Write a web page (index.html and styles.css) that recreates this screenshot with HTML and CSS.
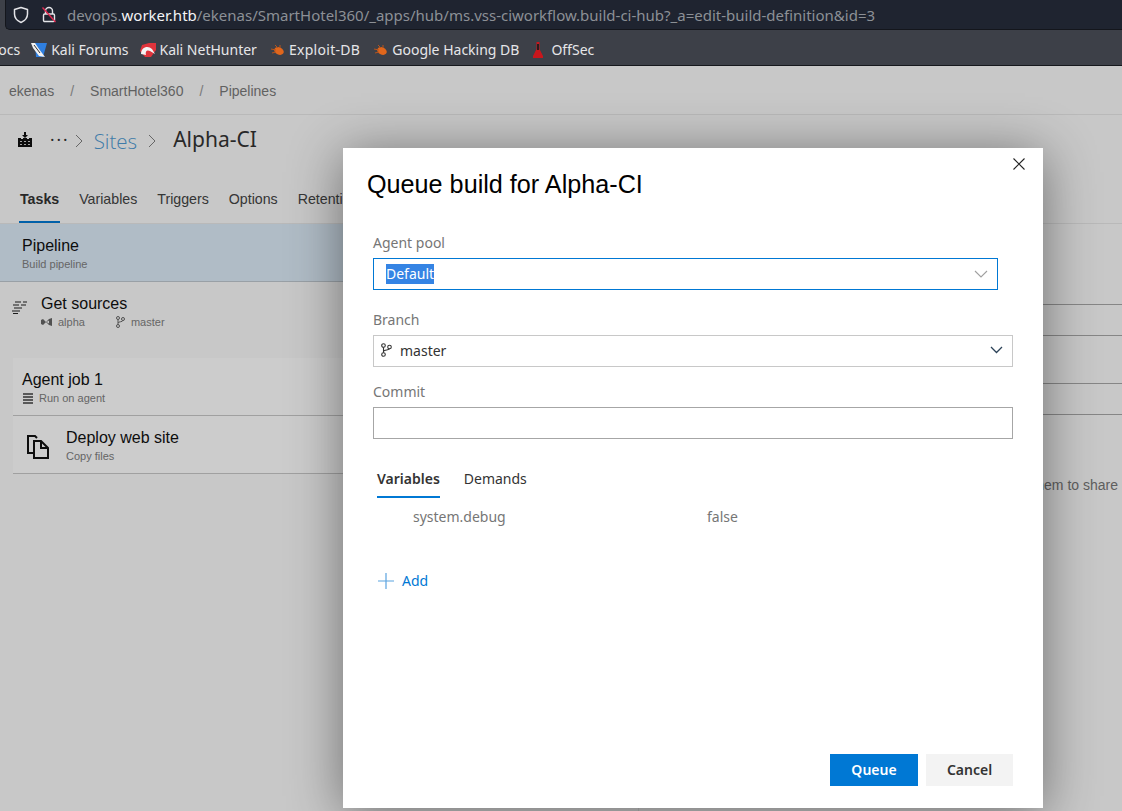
FILE: index.html
```html
<!DOCTYPE html>
<html lang="en">
<head>
  <meta charset="UTF-8" />
  <title>Alpha-CI - Pipelines</title>
  <link rel="stylesheet" href="styles.css">
</head>
<body>

  <!-- Browser chrome -->
  <div class="browser">
    <div class="urlbar">
      <svg class="shield" width="16" height="18" viewBox="0 0 16 18"><path d="M8 1.5 L14.5 3.5 V8 C14.5 12 11.5 15 8 16.5 C4.5 15 1.5 12 1.5 8 V3.5 Z" fill="none" stroke="#e4e4e8" stroke-width="1.5" stroke-linejoin="round"/></svg>
      <svg class="lock" width="14" height="18" viewBox="0 0 14 18"><path d="M3.5 8 V5 a3.5 3.5 0 0 1 7 0 V8" fill="none" stroke="#e4e4e8" stroke-width="1.4"/><rect x="1.5" y="8" width="11" height="7.5" rx="1.2" fill="none" stroke="#e4e4e8" stroke-width="1.4"/><path d="M0.5 1.5 L13.5 16" stroke="#e22850" stroke-width="1.4"/></svg>
      <span class="url">devops.<b>worker.htb</b>/ekenas/SmartHotel360/_apps/hub/ms.vss-ciworkflow.build-ci-hub?_a=edit-build-definition&amp;id=3</span>
    </div>
    <div class="bookmarks">
      <span class="bm bm-cut">Docs</span>
      <span class="bm bm-forums">
        <svg width="17" height="16" viewBox="0 0 17 16"><path d="M5 1 H17 L13 15 H6 Z" fill="#2f7fe0"/><path d="M1 1 L5 1 L9 7 L15 15 L9 14 L3 6 Z" fill="#f2f2f2"/><path d="M4 3 L10 11" stroke="#333" stroke-width="1"/></svg>
        Kali Forums
      </span>
      <span class="bm">
        <svg width="16" height="16" viewBox="0 0 16 16"><path d="M2 3 L9 1 H16 V8 L11 15 H5 L0 9 Z" fill="#e0343c"/><path d="M1 12 C1 5 8 3 12 7 L15 12 L10 9 C8 8 5 8 6 13 Z" fill="#f4f4f4"/></svg>
        Kali NetHunter
      </span>
      <span class="bm bm-exploit">
        <svg width="16" height="14" viewBox="0 0 16 14"><ellipse cx="9" cy="8" rx="5" ry="3.6" transform="rotate(25 9 8)" fill="#e0661c"/><path d="M1 6 L6 7 M2 10 L6 9 M5 2 L8 5 M10 2 L10 5" stroke="#b8541c" stroke-width="1"/></svg>
        Exploit-DB
      </span>
      <span class="bm bm-ghdb">
        <svg width="16" height="14" viewBox="0 0 16 14"><ellipse cx="9" cy="8" rx="5" ry="3.6" transform="rotate(25 9 8)" fill="#e0661c"/><path d="M1 6 L6 7 M2 10 L6 9 M5 2 L8 5 M10 2 L10 5" stroke="#b8541c" stroke-width="1"/></svg>
        Google Hacking DB
      </span>
      <span class="bm bm-offsec">
        <svg width="12" height="18" viewBox="0 0 12 18"><path d="M4.5 1 H7.5 V8 L11 15 V17 H1 V15 L4.5 8 Z" fill="#c8161c"/><path d="M5 3 H7 V9 H5 Z" fill="#2a1c1c"/></svg>
        OffSec
      </span>
    </div>
  </div>

  <!-- Page behind the dialog -->
  <div class="page">
    <nav class="crumbs">
      <span>ekenas</span><i>/</i><span>SmartHotel360</span><i>/</i><span>Pipelines</span>
    </nav>

    <div class="title-row">
      <svg class="build-icon" width="14" height="15" viewBox="0 0 14 15"><path d="M6 0 H8 V3 H10 L7 6 L4 3 H6 Z" fill="#111"/><path d="M0 6 H3 V7 H5 V6 H9 V7 H11 V6 H14 V15 H0 Z" fill="#111"/><path d="M2 9 H4 V10 H2 Z M6 9 H8 V10 H6 Z M10 9 H12 V10 H10 Z M2 12 H4 V13 H2 Z M6 12 H8 V13 H6 Z M10 12 H12 V13 H10 Z" fill="#ccc"/></svg>
      <span class="dots">···</span>
      <svg class="crumb-chev" width="8" height="14" viewBox="0 0 8 14"><path d="M1 1 L7 7 L1 13" fill="none" stroke="#808080"/></svg>
      <span class="sites">Sites</span>
      <svg class="crumb-chev" width="8" height="14" viewBox="0 0 8 14"><path d="M1 1 L7 7 L1 13" fill="none" stroke="#808080"/></svg>
      <span class="def-name">Alpha-CI</span>
    </div>

    <div class="tabs">
      <span class="tab active">Tasks</span>
      <span class="tab">Variables</span>
      <span class="tab">Triggers</span>
      <span class="tab">Options</span>
      <span class="tab">Retention</span>
    </div>

    <div class="editor">
      <div class="left-col">
        <div class="pipeline-row">
          <div class="row-title">Pipeline</div>
          <div class="row-sub">Build pipeline</div>
        </div>

        <div class="sources-row">
          <svg class="sources-icon" width="15" height="13" viewBox="0 0 15 13"><path d="M3 1 H9 M11 1 H15 M1 4 H7 M9 4 H14 M2 7 H10 M0 10 H8 M1 12.5 H6" stroke="#222" stroke-width="1" fill="none"/></svg>
          <div>
            <div class="row-title">Get sources</div>
            <div class="row-sub sources-sub">
              <span class="sub-item">
                <svg width="11" height="10" viewBox="0 0 11 10"><path d="M0 3 L2 2 L8 8 L11 9 V1 L8 2 L2 8 L0 7 Z M8 3.5 L5.5 5 L8 6.5 Z" fill="#666" fill-rule="evenodd"/></svg>
                alpha
              </span>
              <span class="sub-item">
                <svg width="9" height="12" viewBox="0 0 9 12"><circle cx="2" cy="2" r="1.5" fill="none" stroke="#666"/><circle cx="2" cy="10" r="1.5" fill="none" stroke="#666"/><circle cx="7" cy="3" r="1.5" fill="none" stroke="#666"/><path d="M2 3.5 V8.5 M2 7 C2 5.5 7 6 7 4.5" fill="none" stroke="#666"/></svg>
                master
              </span>
            </div>
          </div>
        </div>

        <div class="job-card">
          <div class="job-head">
            <div class="row-title">Agent job 1</div>
            <div class="row-sub job-sub">
              <svg width="10" height="11" viewBox="0 0 10 11"><path d="M0 0 H10 V2 H0 Z M0 3 H10 V5 H0 Z M0 6 H10 V8 H0 Z M0 9 H10 V11 H0 Z" fill="#707070"/></svg>
              Run on agent
            </div>
          </div>
          <div class="task-row">
            <svg class="copy-icon" width="24" height="26" viewBox="0 0 24 26"><path d="M7 19 H2 V2 H9 L11 4" fill="none" stroke="#111" stroke-width="2"/><path d="M8 7 H15 L22 14 V24 H8 Z M15 7 V14 H22" fill="none" stroke="#111" stroke-width="2"/></svg>
            <div>
              <div class="row-title">Deploy web site</div>
              <div class="row-sub">Copy files</div>
            </div>
          </div>
        </div>
      </div>

      <div class="right-col">
        <div class="right-line first"></div>
        <div class="right-line second"></div>
        <div class="right-line third"></div>
        <div class="right-line fourth"></div>
        <p class="right-note">Add variables and link them to share</p>
      </div>
    </div>

    <div class="overlay"></div>

    <!-- Queue build dialog -->
    <div class="dialog">
      <svg class="close" width="12" height="12" viewBox="0 0 12 12"><path d="M0.5 0.5 L11.5 11.5 M11.5 0.5 L0.5 11.5" stroke="#222" stroke-width="1.1"/></svg>
      <h1>Queue build for Alpha-CI</h1>

      <div class="fields">
        <label>Agent pool</label>
        <div class="box box-focus">
          <span class="selected">Default</span>
          <svg width="14" height="8" viewBox="0 0 14 8"><path d="M1 1 L7 7 L13 1" fill="none" stroke="#a0a0a0" stroke-width="1.1"/></svg>
        </div>

        <label>Branch</label>
        <div class="box box-branch">
          <svg class="branch-icon" width="11" height="14" viewBox="0 0 11 14"><circle cx="2.5" cy="2.5" r="1.8" fill="none" stroke="#333" stroke-width="1.1"/><circle cx="2.5" cy="11.5" r="1.8" fill="none" stroke="#333" stroke-width="1.1"/><circle cx="8.5" cy="4" r="1.8" fill="none" stroke="#333" stroke-width="1.1"/><path d="M2.5 4.3 V9.7 M2.5 8.5 C2.5 6.5 8.5 7.5 8.5 5.8" fill="none" stroke="#333" stroke-width="1.1"/></svg>
          <span class="branch-name">master</span>
          <svg width="13" height="8" viewBox="0 0 13 8"><path d="M1 1 L6.5 6.5 L12 1" fill="none" stroke="#2c4258" stroke-width="1.3"/></svg>
        </div>

        <label>Commit</label>
        <div class="box box-commit"></div>
      </div>

      <div class="inner-tabs">
        <span class="inner-tab active">Variables</span>
        <span class="inner-tab">Demands</span>
      </div>
      <div class="var-row">
        <span class="var-name">system.debug</span>
        <span>false</span>
      </div>

      <div class="add-row">
        <svg width="16" height="16" viewBox="0 0 16 16"><path d="M8 0 V16 M0 8 H16" stroke="#5ba3e0" stroke-width="1.2"/></svg>
        <span>Add</span>
      </div>

      <div class="dialog-footer">
        <button class="btn btn-primary">Queue</button>
        <button class="btn">Cancel</button>
      </div>
    </div>
  </div>

</body>
</html>
```

FILE: styles.css
```css
* {
  box-sizing: border-box;
}

html, body {
  height: 100%;
}

body {
  margin: 0;
  overflow: hidden;
  font-family: "Liberation Sans", sans-serif;
  background: #fafafa;
}

/* browser chrome */
.browser {
  height: 66px;
  background: #3d4048;
  border-bottom: 1px solid #16181d;
  font-family: "Noto Sans", sans-serif;
  overflow: hidden;
}

.urlbar {
  height: 30px;
  margin-left: 5px;
  padding-left: 7px;
  display: flex;
  align-items: center;
  background: #1f2430;
  border-radius: 0 0 0 5px;
  border-bottom: 1px solid #14161c;
  border-left: 1px solid #14161c;
}

.lock {
  margin-left: 13px;
}

.url {
  margin-left: 11px;
  font-size: 15px;
  color: #8c9096;
  white-space: nowrap;
}

.url b {
  font-weight: normal;
  color: #f4f4f6;
}

.bookmarks {
  height: 35px;
  padding-top: 4px;
  display: flex;
  align-items: center;
  gap: 12px;
  margin-left: -12px;
  color: #e6e6e8;
  font-size: 14px;
  white-space: nowrap;
}

.bm {
  display: flex;
  align-items: center;
  gap: 3px;
}

.bm-forums {
  margin-left: -2px;
  gap: 4px;
}

.bm-exploit {
  margin-left: 1px;
  letter-spacing: 0.3px;
}

.bm-ghdb {
  margin-left: 1px;
}

.bm-offsec {
  margin-left: 1px;
  gap: 7px;
}

/* page */
.page {
  position: relative;
  height: 745px;
  overflow: hidden;
  color: #222;
}

.overlay {
  position: absolute;
  inset: 0;
  background: rgba(0, 0, 0, 0.2);
}

.crumbs {
  height: 49px;
  padding: 2px 0 0 9px;
  display: flex;
  align-items: center;
  font-size: 14px;
  color: #7a7a7a;
  border-bottom: 1px solid #e8e8e8;
}

.crumbs i {
  font-style: normal;
  margin: 0 16px;
  color: #999;
}

.title-row {
  height: 52px;
  padding: 0 0 4px 18px;
  display: flex;
  align-items: center;
  font-family: "Noto Sans", sans-serif;
}

.dots {
  margin: 0 -4px 0 18px;
  font-size: 17px;
  letter-spacing: 2px;
  color: #333;
}

.crumb-chev {
  margin: 3px 10px 0 9px;
}

.sites {
  font-family: "Open Sans", sans-serif;
  font-size: 20.5px;
  font-weight: 300;
  color: #4f9ad4;
  margin: 3px 2px 0 1px;
}

.def-name {
  margin-left: 7px;
  font-size: 21px;
  color: #333;
}

.tabs {
  height: 57px;
  padding: 17px 0 0 20px;
  display: flex;
  gap: 20px;
  font-size: 14.2px;
  color: #444;
  border-bottom: 1px solid #e8e8e8;
}

.tab {
  height: 39px;
  padding-top: 7px;
}

.tab.active {
  font-weight: bold;
  color: #333;
  border-bottom: 2px solid #0078d4;
  padding: 7px 1px 0;
  margin: 0 -1px;
}

.editor {
  display: flex;
  height: 588px;
}

.left-col {
  width: 638px;
}

.row-title {
  font-size: 16px;
  color: #111;
}

.row-sub {
  margin-top: 3px;
  font-size: 11px;
  color: #808080;
}

.pipeline-row {
  height: 58px;
  padding: 13px 0 0 22px;
  background: #dcebf8;
  border-bottom: 1px solid #c0c8d0;
}

.sources-row {
  display: flex;
  gap: 14px;
  padding: 13px 0 0 12px;
  height: 76px;
}

.sources-icon {
  margin-top: 6px;
}

.sources-sub {
  display: flex;
  gap: 31px;
  margin-top: 3px;
}

.sub-item {
  display: flex;
  align-items: center;
  gap: 6px;
}

.job-card {
  margin-left: 13px;
  background: #ffffff;
}

.job-head {
  height: 58px;
  padding: 13px 0 0 9px;
  border-bottom: 1px solid #c8c8c8;
}

.job-sub {
  display: flex;
  align-items: center;
  gap: 6px;
  padding-left: 1px;
}

.task-row {
  height: 58px;
  display: flex;
  padding: 13px 0 0 13px;
  gap: 16px;
  border-bottom: 1px solid #c8c8c8;
}

.copy-icon {
  margin-top: 5px;
}

.right-col {
  flex: 1;
  border-left: 1px solid #e8e8e8;
  font-size: 14px;
  color: #777;
}

.right-line {
  border-bottom: 1px solid #a8a8a8;
}

.right-line.first {
  height: 81px;
}

.right-line.second {
  height: 31px;
}

.right-line.third {
  height: 48px;
}

.right-line.fourth {
  height: 31px;
}

.right-note {
  margin: 62px 4px 0 0;
  text-align: right;
  white-space: nowrap;
}

/* dialog */
.dialog {
  position: absolute;
  left: 343px;
  top: 82px;
  width: 700px;
  height: 660px;
  padding: 0 30px 22px 30px;
  display: flex;
  flex-direction: column;
  background: #fff;
  box-shadow: 0 6px 50px rgba(0, 0, 0, 0.45);
  font-family: "Noto Sans", sans-serif;
}

.close {
  position: absolute;
  top: 10px;
  right: 18px;
}

.dialog h1 {
  margin: 21px 0 0 -6px;
  font-family: "Liberation Sans", sans-serif;
  font-size: 25.2px;
  font-weight: normal;
  line-height: 30px;
  color: #000;
}

.fields label {
  display: block;
  font-size: 14px;
  line-height: 20px;
  color: #767676;
}

.fields label:first-child {
  margin-top: 34px;
}

.box {
  height: 32px;
  display: flex;
  align-items: center;
  border: 1px solid #c8c8c8;
  font-size: 14px;
  color: #333;
}

.box-focus {
  width: 625px;
  margin: 5px 0 20px;
  padding: 0 9px 0 12px;
  border-color: #0078d4;
  justify-content: space-between;
}

.selected {
  background: #3584e4;
  color: #fff;
  line-height: 20px;
}

.box-branch {
  margin: 5px 0 15px;
  padding: 0 9px 2px 7px;
}

.branch-name {
  flex: 1;
  margin-left: 8px;
}

.box-commit {
  margin-top: 5px;
  border-color: #a6a6a6;
}

.inner-tabs {
  margin: 28px 0 0 4px;
  display: flex;
  gap: 24px;
  font-size: 14px;
  color: #333;
}

.inner-tab {
  height: 31px;
  line-height: 24px;
}

.inner-tab.active {
  font-weight: 600;
  border-bottom: 2px solid #0078d4;
}

.var-row {
  margin: 9px 0 0 40px;
  display: flex;
  font-size: 14px;
  line-height: 20px;
  color: #767676;
}

.var-name {
  width: 294px;
}

.add-row {
  margin: 44px 0 0 5px;
  display: flex;
  align-items: center;
  gap: 8px;
  font-size: 14px;
  color: #0078d4;
}

.dialog-footer {
  margin-top: auto;
  display: flex;
  justify-content: flex-end;
  gap: 8px;
}

.btn {
  width: 87px;
  height: 32px;
  padding: 0 0 2px;
  border: none;
  background: #f3f3f3;
  color: #333;
  font-family: "Noto Sans", sans-serif;
  font-size: 14px;
  font-weight: 600;
}

.btn-primary {
  width: 88px;
  background: #0078d4;
  color: #fff;
}
```
